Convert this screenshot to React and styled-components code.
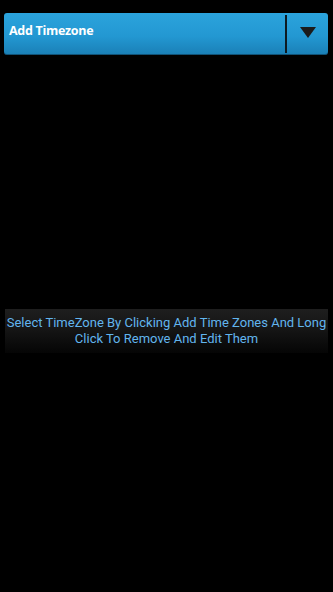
import React from "react";
import styled, { createGlobalStyle } from "styled-components";

const Global = createGlobalStyle`
  html, body { margin: 0; padding: 0; background: #000; }
  body { width: 333px; height: 592px; overflow: hidden; }
`;

const Screen = styled.div`
  width: 333px;
  height: 592px;
  background: #000;
  display: flex;
  flex-direction: column;
  box-sizing: border-box;
  padding: 13px 5px 0 4px;
`;

const Spinner = styled.div`
  height: 42px;
  display: flex;
  align-items: stretch;
  border-radius: 3px;
  background: linear-gradient(to bottom, #2ba3dc 0%, #2398d2 55%, #1a7fb6 100%);
  box-shadow: inset 0 -1px 0 rgba(0,0,0,0.35);
`;

const Label = styled.div`
  flex: 1;
  display: flex;
  align-items: center;
  padding: 0 0 8px 5px;
  color: #fff;
  font-family: "Open Sans", "DejaVu Sans", sans-serif;
  font-weight: 700;
  font-size: 12.5px;
  letter-spacing: -0.3px;
`;

const Divider = styled.div`
  width: 2px;
  margin: 2px 0;
  background: #0d1a22;
`;

const ArrowBox = styled.div`
  width: 41px;
  display: flex;
  align-items: center;
  justify-content: center;
  padding-bottom: 4px;
`;

const Arrow = styled.div`
  width: 0;
  height: 0;
  border-left: 8px solid transparent;
  border-right: 8px solid transparent;
  border-top: 11px solid #1b1b1b;
`;

const Body = styled.div`
  flex: 1;
  display: flex;
  flex-direction: column;
  justify-content: flex-start;
  padding-top: 254px;
`;

const Hint = styled.div`
  margin-left: 1px;
  height: 43px;
  display: flex;
  align-items: center;
  justify-content: center;
  text-align: center;
  background: linear-gradient(to bottom, #1e1e1e 0%, #141414 50%, #050505 100%);
  color: #62b5ee;
  font-family: Roboto, "Liberation Sans", sans-serif;
  font-size: 13px;
  line-height: 16px;
  padding: 0 0 1px 0;
`;

export default function App() {
  return (
    <>
      <Global />
      <Screen>
        <Spinner>
          <Label>Add Timezone</Label>
          <Divider />
          <ArrowBox>
            <Arrow />
          </ArrowBox>
        </Spinner>
        <Body>
          <Hint>
            Select TimeZone By Clicking Add Time Zones And Long
            <br />
            Click To Remove And Edit Them
          </Hint>
        </Body>
      </Screen>
    </>
  );
}
